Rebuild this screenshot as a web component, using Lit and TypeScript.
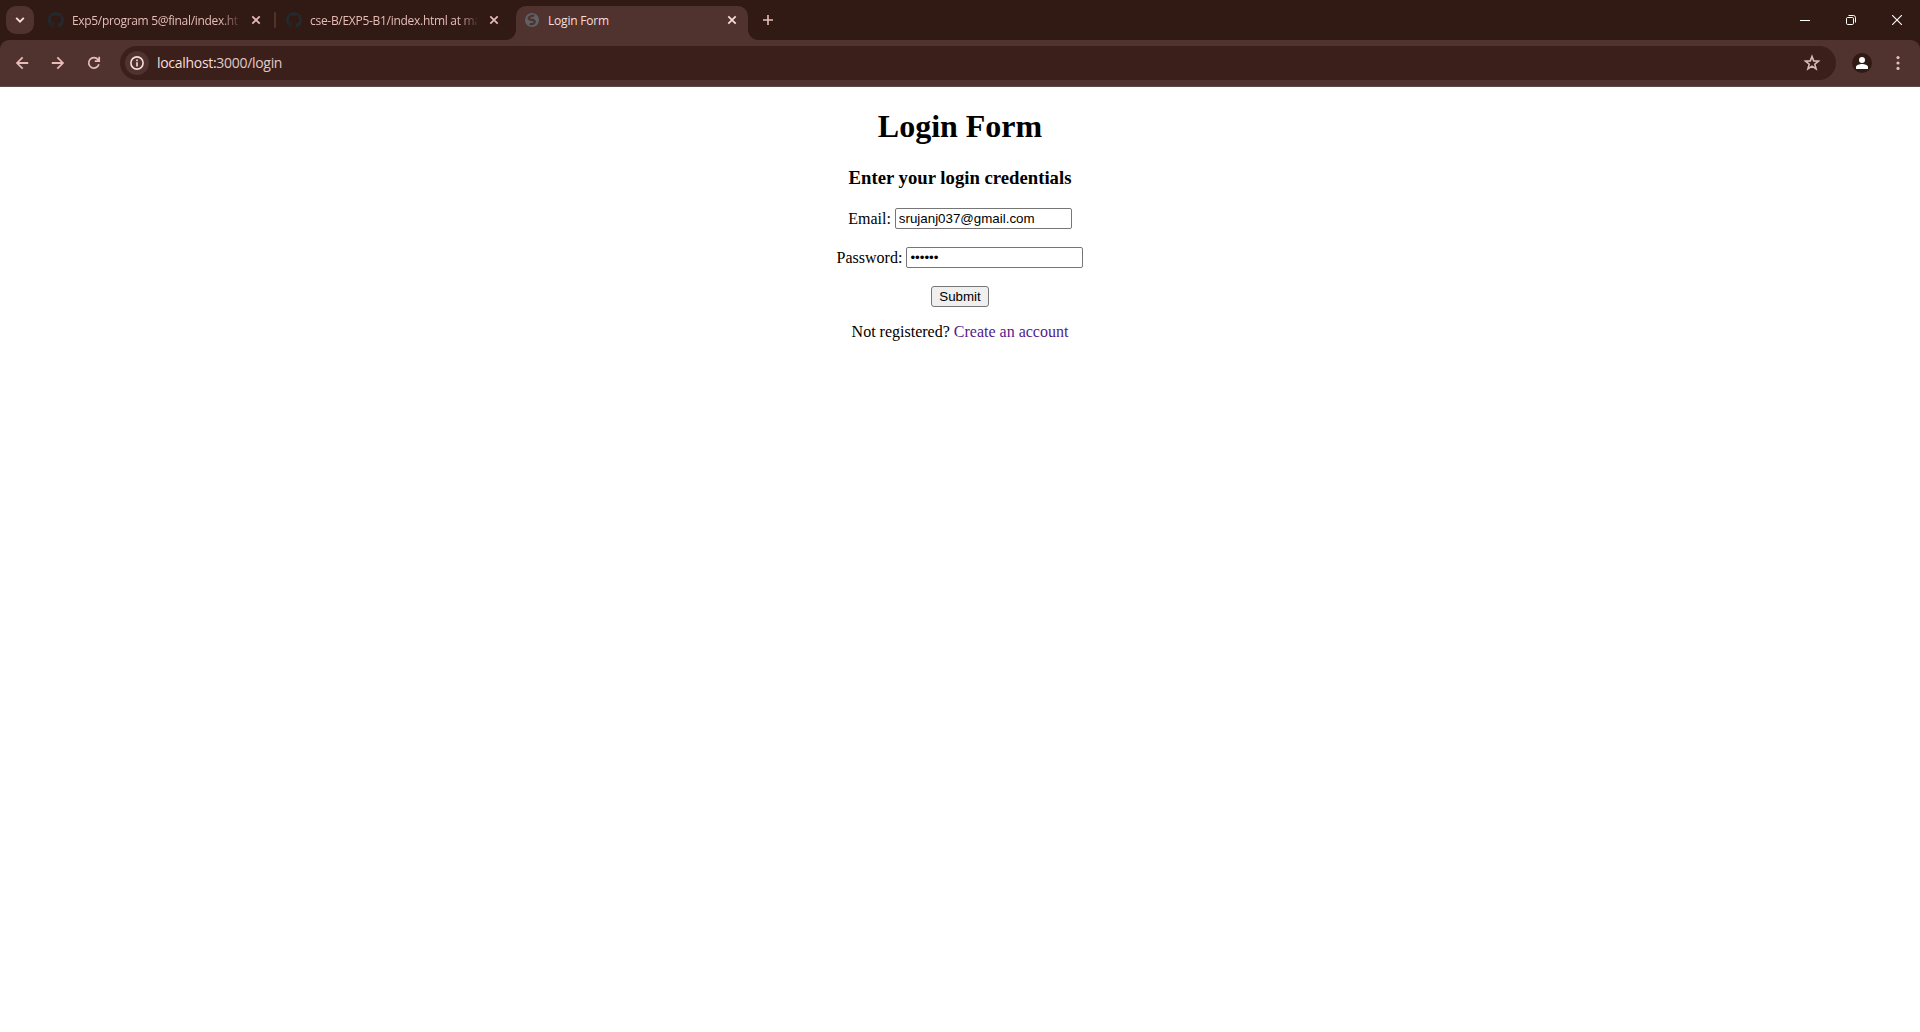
import { LitElement, html, css } from "lit";
import { customElement } from "lit/decorators.js";

const closeIcon = html`<svg class="close" width="10" height="10" viewBox="0 0 10 10">
  <path d="M1.3 1.3 8.7 8.7M8.7 1.3 1.3 8.7" fill="none" stroke="currentColor" stroke-width="1.7" />
</svg>`;

const githubIcon = html`<svg class="fav" width="16" height="16" viewBox="0 0 16 16">
  <path fill="#24292e" d="M8 0C3.58 0 0 3.58 0 8c0 3.54 2.29 6.53 5.47 7.59.4.07.55-.17.55-.38 0-.19-.01-.82-.01-1.49-2.01.37-2.53-.49-2.69-.94-.09-.23-.48-.94-.82-1.13-.28-.15-.68-.52-.01-.53.63-.01 1.08.58 1.23.82.72 1.21 1.87.87 2.33.66.07-.52.28-.87.51-1.07-1.78-.2-3.64-.89-3.64-3.95 0-.87.31-1.59.82-2.15-.08-.2-.36-1.02.08-2.12 0 0 .67-.21 2.2.82.64-.18 1.32-.27 2-.27s1.36.09 2 .27c1.53-1.04 2.2-.82 2.2-.82.44 1.1.16 1.92.08 2.12.51.56.82 1.27.82 2.15 0 3.07-1.87 3.75-3.65 3.95.29.25.54.73.54 1.48 0 1.07-.01 1.93-.01 2.2 0 .21.15.46.55.38A8.01 8.01 0 0 0 16 8c0-4.42-3.58-8-8-8Z" />
</svg>`;

const globeIcon = html`<svg class="fav" width="16" height="16" viewBox="0 0 16 16">
  <circle cx="8" cy="8" r="7" fill="#5f6368" />
  <path fill="none" stroke="#50332f" stroke-width="2.3" d="M10.400 3.700C7.400 3.400 4.200 5 4.600 6.800 5 8.300 8.400 7.300 9.800 8.300 11.600 9.500 10.600 11.600 8.600 12.100 7.600 12.300 6.600 12.200 5.600 11.700" />
</svg>`;

@customElement("app-root")
export class AppRoot extends LitElement {
  static styles = css`
    :host { display: flex; flex-direction: column; height: 1032px; background: #fff; overflow: hidden; color: #000; }
    * { box-sizing: border-box; }
    svg { display: block; flex: none; }
    .browser { background: #311914; font-family: "Open Sans", "Noto Sans", sans-serif; color: #e7bdb6; }
    .strip { display: flex; height: 40px; padding-left: 6px; align-items: center; }
    .search { width: 28px; height: 28px; border-radius: 10px; background: #50332f; display: grid; place-items: center; color: #f8ddd8; }
    .tab { display: flex; align-items: center; height: 28px; font-size: 12px; }
    .first { width: 240px; padding-left: 14px; }
    .second { width: 240px; padding-left: 10px; }
    .title { flex: none; margin-left: 8px; white-space: nowrap; line-height: 20px; padding-top: 1px; }
    .first .title, .second .title { width: 167px; -webkit-mask-image: linear-gradient(to right, #000 148px, transparent 170px); mask-image: linear-gradient(to right, #000 148px, transparent 170px); }
    .first .title { letter-spacing: -0.32px; }
    .second .title { letter-spacing: -0.29px; }
    .close { margin-left: 12px; }
    .divider { width: 2px; height: 16px; background: #50332f; border-radius: 1px; }
    .active { position: relative; width: 232px; height: 34px; align-self: flex-end; border-radius: 10px 10px 0 0; background: #50332f; color: #f8ddd8; padding: 0 11px 6px 8px; }
    .active .close { margin-left: auto; }
    .active .title { letter-spacing: -0.2px; }
    .active::before, .active::after { content: ""; position: absolute; bottom: 0; width: 10px; height: 10px; }
    .active::before { left: -10px; background: radial-gradient(circle at 0 0, transparent 9.5px, #50332f 10.2px); }
    .active::after { right: -10px; background: radial-gradient(circle at 100% 0, transparent 9.5px, #50332f 10.2px); }
    .plus { margin-left: 15px; }
    .window { display: flex; margin-left: auto; color: #fff; }
    .window span { width: 46px; display: grid; place-items: center; }
    .toolbar { display: flex; align-items: center; height: 47px; border-radius: 9px 9px 0 0; background: #50332f; border-bottom: 1px solid #5c4a47; padding-left: 14px; }
    .nav { display: flex; gap: 20px; width: 106px; }
    .omnibox { display: flex; align-items: center; width: 1716px; height: 34px; border-radius: 17px; background: #3a1f1b; padding: 0 14px 0 5px; }
    .info { width: 24px; height: 24px; border-radius: 50%; background: #50332f; display: grid; place-items: center; color: #f8ddd8; }
    .url { margin-left: 8px; font-size: 14px; line-height: 20px; color: #f8ddd8; letter-spacing: -0.3px; }
    .path { color: #e0c9c5; }
    .star { margin-left: auto; color: #d8bcb7; }
    .profile { margin-left: 16px; }
    .dots { margin-left: 18px; }
    .page { flex: 1; text-align: center; font: 16px/18px "Liberation Serif", "Times New Roman", serif; padding-top: 21px; }
    h1 { margin: 0 0 22px; font-size: 32px; line-height: 37px; }
    h3 { margin: 0 0 19px; font-size: 18.72px; line-height: 22px; }
    .row { display: flex; justify-content: center; align-items: center; gap: 4px; height: 21px; margin-bottom: 18px; }
    input { width: 177px; height: 21px; padding: 1px 2px 1px 3px; border: 1px solid #767676; border-radius: 2px; font: 13.333px "Liberation Sans", Arial, sans-serif; background: #fff; color: #000; }
    button { width: 58px; height: 21px; padding: 0; border: 1px solid #767676; border-radius: 3px; background: #efefef; font: 13.333px "Liberation Sans", Arial, sans-serif; color: #000; }
    p { margin: -2px 0 0; }
    a { color: #551a8b; text-decoration: none; }
  `;

  render() {
    return html`
      <div class="browser">
        <div class="strip">
          <div class="search">
            <svg width="10" height="8" viewBox="0 0 10 8"><path d="M1.200 1.800 5 5.600 8.800 1.800" fill="none" stroke="currentColor" stroke-width="1.900" /></svg>
          </div>
          <div class="tab first">${githubIcon}<span class="title">Exp5/program 5@final/index.ht</span>${closeIcon}</div>
          <div class="divider"></div>
          <div class="tab second">${githubIcon}<span class="title">cse-B/EXP5-B1/index.html at ma</span>${closeIcon}</div>
          <div class="tab active">${globeIcon}<span class="title">Login Form</span>${closeIcon}</div>
          <svg class="plus" width="10" height="10" viewBox="0 0 10 10"><path d="M5 0V10M0 5H10" stroke="currentColor" stroke-width="1.600" /></svg>
          <div class="window">
            <span><svg width="10" height="10" viewBox="0 0 10 10"><path d="M0 5.500H10" stroke="currentColor" /></svg></span>
            <span><svg width="10" height="10" viewBox="0 0 10 10" fill="none" stroke="currentColor"><rect x=".5" y="2.500" width="7" height="7" rx="1.200" /><path d="M2.500.5H7.300A2.200 2.200 0 0 1 9.500 2.700V7.500" /></svg></span>
            <span><svg width="10" height="10" viewBox="0 0 10 10"><path d="M0 0 10 10M10 0 0 10" stroke="currentColor" stroke-width="1.100" /></svg></span>
          </div>
        </div>
        <div class="toolbar">
          <div class="nav">
            <svg width="16" height="16" viewBox="0 0 16 16" fill="currentColor"><path d="M5.100 8.900 9.300 13.100 8 14.300 1.800 8 8 1.700 9.300 2.900 5.100 7.100H14.200V8.900Z" /></svg>
            <svg width="16" height="16" viewBox="0 0 16 16" fill="currentColor"><path d="M10.900 8.900 6.700 13.100 8 14.300 14.200 8 8 1.700 6.700 2.900 10.900 7.100H1.800V8.900Z" /></svg>
            <svg width="16" height="16" viewBox="0 0 16 16" fill="none" stroke="currentColor" stroke-width="1.700"><path d="M12.900 9.300A5.200 5.200 0 1 1 12 4.600L13 5.800M13.200 1.800V6.200H8.800" /></svg>
          </div>
          <div class="omnibox">
            <span class="info"><svg width="16" height="16" viewBox="0 0 16 16"><circle cx="8" cy="8" r="6.100" fill="none" stroke="currentColor" stroke-width="1.600" /><path d="M8 7.200V11.400M8 4.600V6.200" stroke="currentColor" stroke-width="1.600" /></svg></span>
            <span class="url">localhost:<span class="path">3000/login</span></span>
            <svg class="star" width="20" height="20" viewBox="0 0 20 20"><path d="M10 3.500 11.700 7.900 16.500 8.200 12.800 11.200 14.100 15.900 10 13.200 5.900 15.900 7.200 11.200 3.500 8.200 8.300 7.900Z" fill="none" stroke="currentColor" stroke-width="1.600" /></svg>
          </div>
          <svg class="profile" width="20" height="20" viewBox="0 0 20 20"><circle cx="10" cy="10" r="10" fill="#311914" /><circle cx="10" cy="7" r="3" fill="#fff" /><path fill="#fff" d="M4 16V14C4 12 7.500 11 10 11S16 12 16 14V16Z" /></svg>
          <svg class="dots" width="16" height="16" viewBox="0 0 16 16" fill="currentColor"><circle cx="8" cy="2.600" r="1.600" /><circle cx="8" cy="8" r="1.600" /><circle cx="8" cy="13.400" r="1.600" /></svg>
        </div>
      </div>
      <div class="page">
        <h1>Login Form</h1>
        <h3>Enter your login credentials</h3>
        <div class="row"><label for="email">Email:</label><input id="email" type="text" .value=${"srujanj037@gmail.com"} /></div>
        <div class="row"><label for="password">Password:</label><input id="password" type="password" .value=${"123456"} /></div>
        <div class="row"><button type="button">Submit</button></div>
        <p>Not registered? <a href="#">Create an account</a></p>
      </div>
    `;
  }
}
